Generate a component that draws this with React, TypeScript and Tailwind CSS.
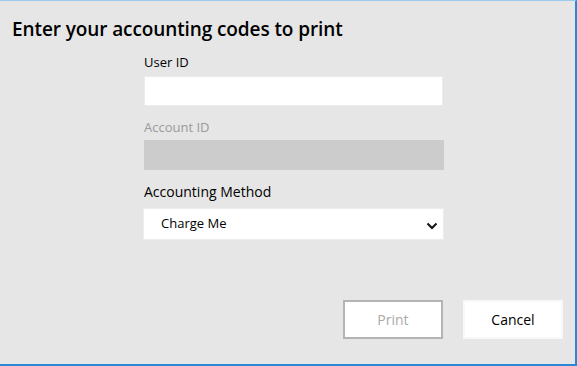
export default function App() {
  return (
    <div
      className="w-[577px] h-[366px] bg-[#e6e6e6] border-t border-t-[#9ccbf0] border-r-2 border-b-2 border-r-[#2b88d8] border-b-[#2b88d8] flex flex-col text-[#000]"
      style={{ fontFamily: '"Open Sans", "Noto Sans", sans-serif' }}
    >
      <div className="pl-3 pt-[15px] h-[42px] text-[19px] leading-[26px] font-semibold tracking-[-0.1px] text-black">
        Enter your accounting codes to print
      </div>

      <div className="ml-[144px] w-[300px] flex flex-col">
        <label className="text-[13px] leading-[18px] mt-[10px]">User ID</label>
        <input
          type="text"
          className="mt-[5px] h-[30px] w-[299px] bg-white border border-[#ececec] outline-none"
        />

        <label className="text-[13px] leading-[18px] mt-[12px] text-[#9a9a9a]">Account ID</label>
        <div className="mt-[4px] h-[30px] bg-[#cccccc]" />

        <label className="text-[14px] leading-[20px] mt-[12px]">Accounting Method</label>
        <div className="mt-[6px] -ml-px h-[32px] bg-white border border-[#ececec] flex items-center justify-between pl-[17px] pr-[5px]">
          <span className="text-[13px]">Charge Me</span>
          <svg width="12" height="8" viewBox="0 0 12 8" className="mt-[3px]">
            <path d="M1.5 1.5 L6 6 L10.5 1.5" fill="none" stroke="#111" strokeWidth="2" />
          </svg>
        </div>
      </div>

      <div className="mt-auto mb-[25px] flex justify-end gap-[20px] pr-[12px]">
        <button className="w-[100px] h-[39px] bg-white border-2 border-[#b4b4b4] text-[#aaaaaa] text-[14px]">
          Print
        </button>
        <button className="w-[100px] h-[39px] bg-white border-2 border-[#f8f8f8] text-black text-[14px]">
          Cancel
        </button>
      </div>
    </div>
  );
}
